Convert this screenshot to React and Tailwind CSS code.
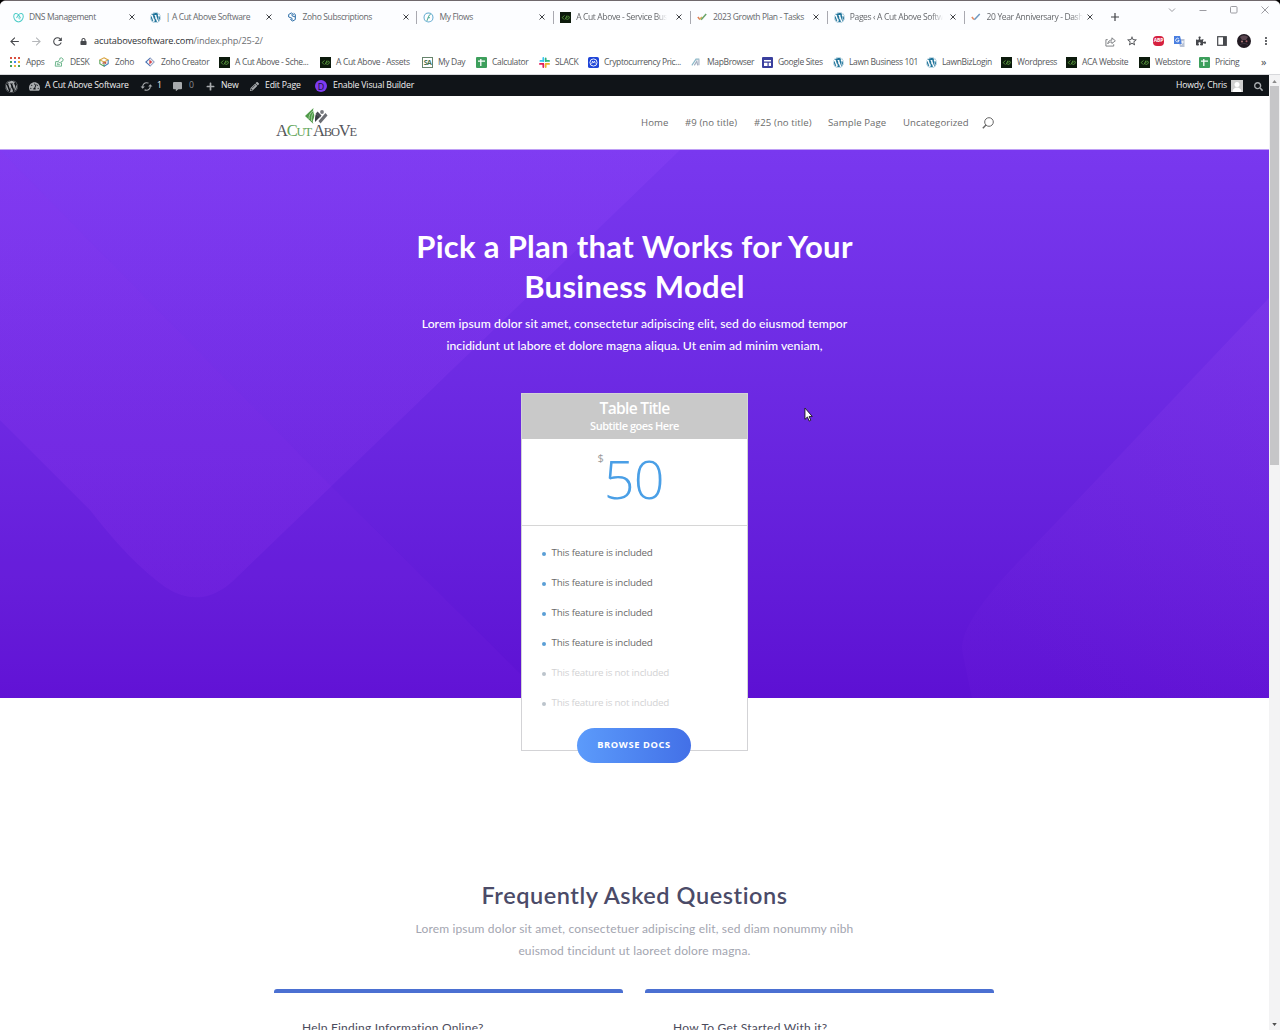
import React from 'react';
import { FaWordpress, FaPuzzlePiece, FaSearch, FaCommentAlt, FaPlus, FaPencilAlt, FaLock, FaTachometerAlt } from 'react-icons/fa';
import { MdArrowBack, MdArrowForward, MdRefresh, MdMoreVert, MdStarBorder, MdSync } from 'react-icons/md';

// favicons
const Wp = () => <FaWordpress className="size-[11px] shrink-0 text-[#21759b]" />;

const Aca = () => (
  <svg viewBox="0 0 11 11" className="size-[11px] shrink-0">
    <rect width="11" height="11" fill="#0c1a0c" />
    <path d="M4.500 3.500 2.200 5.500l1.800 2M5 7.500l2-4M6.500 7.500c2 0 3-1 2.800-2.500S7 4.500 6.500 6.500" stroke="#63a844" strokeWidth="0.800" fill="none" />
  </svg>
);

const Sheet = () => (
  <svg viewBox="0 0 11 11" className="size-[11px] shrink-0">
    <rect width="11" height="11" rx="1" fill="#3d9f5c" />
    <path d="M2 4.200h7M4.800 2v7" stroke="#fff" strokeWidth="1.300" />
  </svg>
);

const GoDaddy = () => (
  <svg viewBox="0 0 12 12" className="size-[11px] shrink-0" fill="none" stroke="#4fcdc8" strokeWidth="1.100">
    <path d="M6 11C3 10 .8 7 .8 4.500.8 1.200 4 .6 6 3l2.200 3.500M6 11c3-1 5.200-4 5.200-6.500C11.200 1.200 8 .6 6 3L3.800 6.500" />
    <path d="M6.500 5v2.500h1.500" strokeWidth="0.800" />
  </svg>
);

const ZohoSub = () => (
  <svg viewBox="0 0 12 12" className="size-[10px] shrink-0" fill="none" stroke="#2f6fa8" strokeWidth="1.200">
    <path d="M8 3.500 5.500 1 2 3v3l4 1.500V10M4 8.500 6.500 11 10 9V6L6 4.500V2.500M10 6V3L8 1.500" />
  </svg>
);

const Flow = () => (
  <svg viewBox="0 0 12 12" className="size-[11px] shrink-0" fill="none" stroke="#5fa9cf" strokeWidth="1.100">
    <circle cx="6" cy="6" r="4.900" />
    <path d="M4 9.800C5.500 8 5 4 8.300 2.300M4.800 6.800 7.500 6" stroke="#58b09c" />
  </svg>
);

const Check = () => (
  <svg viewBox="0 0 12 12" className="size-[10px] shrink-0" fill="none" strokeWidth="1.800">
    <path d="M1 6l2.500 3" stroke="#e07c52" />
    <path d="M3.300 8.800 6 6" stroke="#dcae58" />
    <path d="M5 9.200 11 2.500" stroke="#6aa56a" />
  </svg>
);

const CheckBlue = () => (
  <svg viewBox="0 0 12 12" className="size-[10px] shrink-0" fill="none" strokeWidth="1.800">
    <path d="M1 6l2.500 3" stroke="#e58a62" />
    <path d="M4 9.200 10.500 2.500" stroke="#6e98c0" />
  </svg>
);

const AppsIcon = () => (
  <svg viewBox="0 0 10 10" className="size-[10px] shrink-0">
    <path d="M0 0h2v2H0zM4 0h2v2H4zM8 0h2v2H8z" fill="#d9503f" />
    <path d="M0 4h2v2H0zM8 8h2v2H8z" fill="#46a35e" />
    <path d="M4 4h2v2H4z" fill="#4285f4" />
    <path d="M8 4h2v2H8zM4 8h2v2H4z" fill="#e8b53a" />
    <path d="M0 8h2v2H0z" fill="#46a35e" />
  </svg>
);

const Desk = () => (
  <svg viewBox="0 0 12 12" className="size-[10px] shrink-0" fill="none" stroke="#57ab7b" strokeWidth="1">
    <path d="M2 5.500h3l2 1.500h2v4H1.500zM5 5l2-2V1.500L9 1l2 1.500L10.500 5 8 6M3.500 7.500h2M3.500 9.200h3.500" />
  </svg>
);

const Zoho = () => (
  <svg viewBox="0 0 12 12" className="size-[10px] shrink-0" fill="none" strokeWidth="1.300">
    <path d="M6 1 11 3.500 6 6 1 3.500z" stroke="#d9a441" />
    <path d="M1 3.500V8l5 3V6" stroke="#5ba35a" />
    <path d="M11 3.500V8l-5 3" stroke="#3f7fb8" />
    <path d="M4 7.500l4-1v2" stroke="#c9564c" />
  </svg>
);

const Creator = () => (
  <svg viewBox="0 0 12 12" className="size-[10px] shrink-0" fill="none" strokeWidth="1.300">
    <path d="M6.500 1 1 6l5.500 5" stroke="#4a74b4" />
    <path d="M6 1l5 5-5 5" stroke="#9aa8c8" />
    <path d="M5.500 3.500 8.500 6 5.500 8.500z" fill="#d6444a" stroke="#d6444a" strokeWidth="0.500" />
  </svg>
);

const MyDay = () => (
  <span className="flex size-[11px] shrink-0 items-center justify-center border border-[#66846c] text-[7px] leading-none font-bold tracking-[-0.5px] text-[#45704e]">SA</span>
);

const Slack = () => (
  <svg viewBox="0 0 12 12" className="size-[11px] shrink-0" fill="none" strokeWidth="1.900" strokeLinecap="round">
    <path d="M4.700 1v3.500M1.500 4.300h3" stroke="#36c5f0" />
    <path d="M7.300 1.500v3M7.800 4.300H11" stroke="#2eb67d" />
    <path d="M7.300 7.500V11M7.800 7.500H11" stroke="#ecb22e" />
    <path d="M4.700 7.500V11M1 7.500h3.500" stroke="#e01e5a" />
  </svg>
);

const Coin = () => (
  <svg viewBox="0 0 12 12" className="size-[11px] shrink-0" fill="none" stroke="#fff" strokeWidth="1">
    <rect width="12" height="12" rx="2" fill="#1f45d8" stroke="none" />
    <circle cx="6" cy="6" r="3.900" />
    <path d="M4 7.500 5 4.500l1 2 1-2 1 2.500" strokeWidth="0.900" />
  </svg>
);

const MapIcon = () => (
  <svg viewBox="0 0 12 12" className="size-[10px] shrink-0" fill="none" strokeWidth="1.400">
    <path d="M1 10 6 2.500h4" stroke="#8cb8c8" />
    <path d="M4 10l3-5 1 5M9.500 3v7" stroke="#a3aec0" />
  </svg>
);

const Sites = () => (
  <svg viewBox="0 0 11 11" className="size-[11px] shrink-0">
    <rect width="11" height="11" rx="1" fill="#3a3f9e" />
    <path d="M2 3h7v1.500H2zM2 5.700h3.500V9H2zM6.700 5.700H9V9H6.700z" fill="#fff" />
  </svg>
);

const tabs = [
  { icon: <GoDaddy />, text: 'DNS Management' },
  { icon: <Wp />, text: '| A Cut Above Software' },
  { icon: <ZohoSub />, text: 'Zoho Subscriptions' },
  { icon: <Flow />, text: 'My Flows', sep: true },
  { icon: <Aca />, text: 'A Cut Above - Service Bus', sep: true, fade: true },
  { icon: <Check />, text: '2023 Growth Plan - Tasks', sep: true },
  { icon: <Wp />, text: 'Pages ‹ A Cut Above Softw', sep: true, fade: true },
  { icon: <CheckBlue />, text: '20 Year Anniversary - Dash', sep: true, fade: true },
];

const bookmarks = [
  { icon: <AppsIcon />, text: 'Apps', w: 'w-[44px]' },
  { icon: <Desk />, text: 'DESK', w: 'w-[45px]' },
  { icon: <Zoho />, text: 'Zoho', w: 'w-[46px]' },
  { icon: <Creator />, text: 'Zoho Creator', w: 'w-[74px]' },
  { icon: <Aca />, text: 'A Cut Above - Sche...', w: 'w-[101px]' },
  { icon: <Aca />, text: 'A Cut Above - Assets', w: 'w-[102px]' },
  { icon: <MyDay />, text: 'My Day', w: 'w-[54px]' },
  { icon: <Sheet />, text: 'Calculator', w: 'w-[63px]' },
  { icon: <Slack />, text: 'SLACK', w: 'w-[49px]' },
  { icon: <Coin />, text: 'Cryptocurrency Pric...', w: 'w-[103px]' },
  { icon: <MapIcon />, text: 'MapBrowser', w: 'w-[71px]' },
  { icon: <Sites />, text: 'Google Sites', w: 'w-[71px]' },
  { icon: <Wp />, text: 'Lawn Business 101', w: 'w-[93px]' },
  { icon: <Wp />, text: 'LawnBizLogin', w: 'w-[75px]' },
  { icon: <Aca />, text: 'Wordpress', w: 'w-[65px]' },
  { icon: <Aca />, text: 'ACA Website', w: 'w-[73px]' },
  { icon: <Aca />, text: 'Webstore', w: 'w-[60px]' },
  { icon: <Sheet />, text: 'Pricing', w: 'w-[62px]' },
];

const features = [
  { text: 'This feature is included', on: true },
  { text: 'This feature is included', on: true },
  { text: 'This feature is included', on: true },
  { text: 'This feature is included', on: true },
  { text: 'This feature is not included', on: false },
  { text: 'This feature is not included', on: false },
];

const TabStrip = () => (
  <div className="flex h-[29px] items-center bg-[#fcfdff] pt-[3px] pl-[6px]">
    {tabs.map((t, i) => (
      <div key={i} className="flex w-[136.8px] shrink-0 items-center">
        <span className={t.sep ? 'h-[13px] w-px bg-[#a9a9b0]' : 'h-[13px] w-px'} />
        <span className="ml-[6px] flex w-[16px] items-center">{t.icon}</span>
        <span className="w-[94px] text-[8.5px] tracking-[-0.37px] whitespace-nowrap text-[#66686c]">
          <span className={t.fade ? 'inline-block mask-r-from-88% align-middle' : 'inline-block align-middle'}>{t.text}</span>
        </span>
        <svg viewBox="0 0 6 6" className="ml-[6px] size-[6px]" stroke="#404246" strokeWidth="1">
          <path d="M.5.5l5 5M5.500.5l-5 5" />
        </svg>
      </div>
    ))}
    <svg viewBox="0 0 8 8" className="ml-[11px] size-[8px]" stroke="#404246" strokeWidth="1.200">
      <path d="M4 0v8M0 4h8" />
    </svg>
    <div className="mt-[-14px] ml-auto flex items-center gap-[23px] pr-[11px]">
      <svg viewBox="0 0 8 8" className="size-[8px]" fill="none" stroke="#9c9ca2"><path d="M1 2.500l3 3 3-3" /></svg>
      <svg viewBox="0 0 8 8" className="size-[8px]" fill="none" stroke="#9c9ca2"><path d="M.5 4.500h7" /></svg>
      <svg viewBox="0 0 8 8" className="size-[8px]" fill="none" stroke="#9c9ca2"><rect x=".5" y=".5" width="6.500" height="6.500" rx="1" /></svg>
      <svg viewBox="0 0 8 8" className="size-[8px]" fill="none" stroke="#9c9ca2"><path d="M.5.5l7 7M7.500.5l-7 7" /></svg>
    </div>
  </div>
);

const Toolbar = () => (
  <div className="flex h-[22px] items-center pl-[8px] text-[#46484c]">
    <MdArrowBack className="size-[13px]" />
    <MdArrowForward className="ml-[9px] size-[13px] text-[#b5b7ba]" />
    <MdRefresh className="ml-[8px] size-[13px]" />
    <FaLock className="ml-[16px] size-[7px]" />
    <span className="ml-[7px] text-[9.2px] tracking-[-0.15px] text-[#2e3034]">
      acutabovesoftware.com<span className="text-[#6c6e72]">/index.php/25-2/</span>
    </span>
    <div className="ml-auto flex items-center pr-[8px]">
      <svg viewBox="0 0 12 12" className="size-[11px]" fill="none" stroke="#6a6c70">
        <path d="M3 4H1v7h8.500V9M3 8.500c.5-3 2-4 4.500-4V2L11.300 5.200 7.500 8.200V6.500C5.500 6.500 4 7 3 8.500z" strokeWidth=".9" />
      </svg>
      <MdStarBorder className="ml-[10px] size-[12px]" />
      <span className="ml-[15px] flex h-[10px] w-[11px] items-center justify-center rounded-[4px] bg-[#d6213f] text-[5px] font-bold tracking-[-0.2px] text-white">ABP</span>
      <svg viewBox="0 0 11 11" className="ml-[10px] size-[11px]">
        <path d="M4 3h6.500v8H6z" fill="#b9c3d6" />
        <path d="M0 0h6l2 8H0z" fill="#4a7fe0" />
        <path d="M5 3.200A1.800 1.800 0 1 0 5.200 4.500H3.600M7 6h3M8.500 5.200V6c0 1-.5 2-1.500 3" stroke="#fff" strokeWidth=".8" fill="none" />
      </svg>
      <FaPuzzlePiece className="ml-[11px] size-[10px]" />
      <svg viewBox="0 0 10 10" className="ml-[11px] size-[10px]" fill="none" stroke="#46484c">
        <rect x=".7" y=".7" width="8.600" height="8.600" strokeWidth="1.200" />
        <path d="M7.500 1v8" strokeWidth="3" />
      </svg>
      <svg viewBox="0 0 14 14" className="ml-[10px] size-[14px]">
        <circle cx="7" cy="7" r="7" fill="#221a22" />
        <path d="M3 3c2-2 6-2 8 0L9 6H5z" fill="#5b4650" />
        <circle cx="5" cy="7.500" r="1" fill="#b68080" />
        <circle cx="9.500" cy="7.200" r="1" fill="#a85f68" />
        <path d="M3 11c2-2 6-2 8 0" stroke="#3d3340" fill="none" />
      </svg>
      <MdMoreVert className="ml-[9px] size-[12px]" />
    </div>
  </div>
);

const Bookmarks = () => (
  <div className="flex h-[23px] items-center border-b border-[#d8d9dc] pb-[2px] pl-[10px]">
    {bookmarks.map((b, i) => (
      <div key={i} className={`flex shrink-0 items-center ${b.w}`}>
        <span className="flex w-[16px] shrink-0 items-center">{b.icon}</span>
        <span className="text-[8.5px] tracking-[-0.35px] whitespace-nowrap text-[#55575b]">{b.text}</span>
      </div>
    ))}
    <span className="mt-[-2px] text-[11px] leading-none text-[#46484c]">»</span>
  </div>
);

const AdminBar = () => (
  <div className="flex h-[21px] items-center bg-[#101418] pt-px pl-[5px] text-[8.7px] tracking-[-0.18px] text-[#f0f0f1]">
    <FaWordpress className="size-[13px] text-[#a7aaad]" />
    <FaTachometerAlt className="ml-[11px] size-[11px] text-[#a7aaad]" />
    <span className="ml-[5px] w-[95px] whitespace-nowrap">A Cut Above Software</span>
    <MdSync className="size-[13px] rotate-90 text-[#a7aaad]" />
    <span className="ml-[4px] w-[16px]">1</span>
    <FaCommentAlt className="size-[9px] text-[#a7aaad]" />
    <span className="ml-[7px] w-[17px] text-[#8a8d91]">0</span>
    <FaPlus className="size-[9px] text-[#a7aaad]" />
    <span className="ml-[6px] w-[29px]">New</span>
    <FaPencilAlt className="size-[9px] text-[#a7aaad]" />
    <span className="ml-[6px] w-[50px] whitespace-nowrap">Edit Page</span>
    <span className="flex size-[12px] items-center justify-center rounded-full bg-[#7e3bf2] text-[9px] leading-none text-[#1b1230]">D</span>
    <span className="ml-[6px] whitespace-nowrap">Enable Visual Builder</span>
    <span className="ml-auto">Howdy, Chris</span>
    <svg viewBox="0 0 12 12" className="ml-[4px] size-[12px]">
      <rect width="12" height="12" fill="#cfcfcf" />
      <circle cx="6" cy="4.500" r="2.500" fill="#fff" />
      <path d="M1.500 12c0-6 9-6 9 0z" fill="#fff" />
    </svg>
    <FaSearch className="mr-[6px] ml-[11px] size-[9px] text-[#a7aaad]" />
  </div>
);

const SiteHeader = () => (
  <div className="flex h-[54px] items-center border-b border-[#bf9ff5] bg-white pl-[276px]">
    <div className="flex w-[80px] flex-col items-center pt-[2px]">
      <svg viewBox="0 0 24 16" className="h-[16px] w-[24px]">
        <path d="M9.500 0 1 8l8.500 8c-1-2-1-3 0-5s1-5 0-7 0-3 0-4z" fill="#4f9a48" />
        <path d="M5 11c0-4 1-6 4-8M7.500 13c0-4 0-6 2.500-9" stroke="#b5dbae" strokeWidth=".8" fill="none" />
        <path d="M11 14c0-4 0-6 1-8l4 3z" fill="#3b3d44" />
        <path d="M11.500 6l2-2.500 4 4L16 9.500z" fill="#4b4d54" />
        <path d="M14.500 13l7-8 2 2.500-7 8z" fill="#6b6d73" />
        <circle cx="18" cy="4" r="1.900" fill="#77797e" />
      </svg>
      <span className="mt-[-1px] font-['Liberation_Serif',serif] text-[16.5px] leading-[16px] tracking-[-1.15px] whitespace-nowrap text-[#55565c]">
        A<span className="text-[#5fa457]">C<span className="text-[12.5px]">UT</span></span> A<span className="text-[12.5px]">BO</span>V<span className="text-[12.5px]">E</span>
      </span>
    </div>
    <nav className="ml-[285px] flex items-center pt-px text-[9.6px] tracking-[0.08px] whitespace-nowrap text-[#6c6c6c]">
      <span className="w-[44px]">Home</span>
      <span className="w-[69px]">#9 (no title)</span>
      <span className="w-[74px]">#25 (no title)</span>
      <span className="w-[75px]">Sample Page</span>
      <span className="w-[79px]">Uncategorized</span>
      <svg viewBox="0 0 12 12" className="size-[12px]" fill="none" stroke="#666" strokeWidth="1">
        <circle cx="7" cy="5" r="4.300" />
        <path d="M4 8 .8 11.300" strokeWidth="1.400" />
      </svg>
    </nav>
  </div>
);

const PricingTable = () => (
  <div className="relative mx-auto mt-[36px] h-[358px] w-[227px] border border-[#d3d3d6] bg-white">
    <div className="flex h-[45px] flex-col items-center bg-[#c9c9c9] pt-[4px] text-white">
      <span className="text-[15.6px] leading-[20px] font-semibold tracking-[-0.7px]">Table Title</span>
      <span className="text-[11px] leading-[15px] font-semibold tracking-[-0.45px]">Subtitle goes Here</span>
    </div>
    <div className="flex h-[87px] justify-center border-b border-[#d6d6d6] pt-[12px] pr-[8px]">
      <span className="mt-[-1px] text-[11px] leading-[16px] text-[#9b9b9b]">$</span>
      <span className="text-[54px] leading-[54px] font-light tracking-[-1px] text-[#4a9fe6]">50</span>
    </div>
    <ul className="pt-[12px] pl-[20px]">
      {features.map((f, i) => (
        <li key={i} className="flex h-[30px] items-center">
          <span className={f.on ? 'mt-[2px] size-[4px] rounded-full bg-[#5b9fd6]' : 'mt-[2px] size-[4px] rounded-full bg-[#bcc4cc]'} />
          <span className={f.on ? 'ml-[5.5px] text-[9.8px] tracking-[-0.19px] text-[#6a6a6a]' : 'ml-[5.5px] text-[9.8px] tracking-[-0.22px] text-[#d2d2d4]'}>{f.text}</span>
        </li>
      ))}
    </ul>
    <button className="absolute top-[334px] left-[55px] h-[35px] w-[114px] rounded-full bg-linear-to-r from-[#5c9bfb] to-[#4370e7] pb-[2px] text-[9.3px] font-bold tracking-[0.6px] text-white">
      BROWSE DOCS
    </button>
  </div>
);

const Hero = () => (
  <div className="relative h-[548px] bg-linear-to-b from-[#7938ef] to-[#5d10d3]">
    <svg viewBox="0 0 1269 548" className="absolute inset-0 h-full w-full">
      <defs>
        <linearGradient id="band" x1="0" y1="0" x2="0" y2="1">
          <stop offset="0" stopColor="#9a4dff" stopOpacity=".2" />
          <stop offset="1" stopColor="#9a3df0" stopOpacity=".14" />
        </linearGradient>
        <linearGradient id="side" x1="1" y1="0" x2="0.400" y2="1">
          <stop offset="0" stopColor="#9a4df0" stopOpacity=".2" />
          <stop offset="1" stopColor="#9a3df0" stopOpacity=".05" />
        </linearGradient>
      </defs>
      <path d="M0 0H680L232 432Q200 460 165 437Q130 412 90 360L0 270z" fill="url(#band)" />
      <path d="M0 0 335 340 545 548H0z" fill="#9a3df0" opacity=".07" />
      <path d="M1269 148 1030 400Q960 470 962 500L972 548H1269z" fill="url(#side)" />
    </svg>
    <div className="relative pt-[77px] text-center font-['Lato',sans-serif] text-white">
      <h1 className="text-[31px] leading-[39.5px] font-bold tracking-[0.3px]">
        Pick a Plan that Works for Your<br />Business Model
      </h1>
      <p className="mt-[7px] text-[12.2px] leading-[22px] font-medium tracking-[0.04px]">
        Lorem ipsum dolor sit amet, consectetur adipiscing elit, sed do eiusmod tempor<br />
        incididunt ut labore et dolore magna aliqua. Ut enim ad minim veniam,
      </p>
    </div>
    <PricingTable />
    <svg viewBox="0 0 8 14" className="absolute top-[257px] left-[804px] h-[15px] w-[9px]">
      <path d="M.7 1v10.500L3 9.300l1.600 3.800 1.500-.7L4.600 8.800h2.900z" fill="#fff" stroke="#111" strokeWidth=".8" />
    </svg>
  </div>
);

const Faq = () => (
  <div className="pt-[181px] font-['Lato',sans-serif]">
    <h2 className="text-center text-[23.5px] leading-[32px] font-semibold tracking-[0.56px] text-[#4b4b68]">Frequently Asked Questions</h2>
    <p className="mt-[7px] text-center text-[12px] leading-[21.5px] tracking-[0.16px] text-[#a3a5b0]">
      Lorem ipsum dolor sit amet, consectetuer adipiscing elit, sed diam nonummy nibh<br />
      euismod tincidunt ut laoreet dolore magna.
    </p>
    <div className="mt-[28px] ml-[274px] flex gap-[22px] text-[12px] leading-[16px] tracking-[0.22px] text-[#4b4b5c]">
      <div className="w-[349px] rounded-t-[3px] border-t-[4px] border-[#4b70d2] pt-[27px] pl-[28px]">Help Finding Information Online?</div>
      <div className="w-[349px] rounded-t-[3px] border-t-[4px] border-[#4b70d2] pt-[27px] pl-[28px]">How To Get Started With it?</div>
    </div>
  </div>
);

const App = () => {
  return (
    <div className="h-[1030px] w-[1280px] overflow-hidden bg-black font-['Open_Sans',sans-serif]">
      <div className="flex h-full flex-col overflow-hidden rounded-t-[6px] border-t border-[#6f686c] bg-white">
        <TabStrip />
        <Toolbar />
        <Bookmarks />
        <div className="flex h-[955px]">
          <div className="w-[1269px] overflow-hidden bg-white">
            <AdminBar />
            <SiteHeader />
            <Hero />
            <Faq />
          </div>
          <div className="flex w-[11px] flex-col items-center bg-[#f3f3f4]">
            <svg viewBox="0 0 6 4" className="mt-[5px] h-[3px] w-[5px]" fill="#8a8a8a"><path d="M3 0l3 4H0z" /></svg>
            <div className="mt-[3px] h-[379px] w-[9px] bg-[#c6c6c8]" />
            <svg viewBox="0 0 6 4" className="mt-auto mb-[4px] h-[3px] w-[5px]" fill="#505050"><path d="M0 0h6L3 4z" /></svg>
          </div>
        </div>
      </div>
    </div>
  );
};

export default App;
